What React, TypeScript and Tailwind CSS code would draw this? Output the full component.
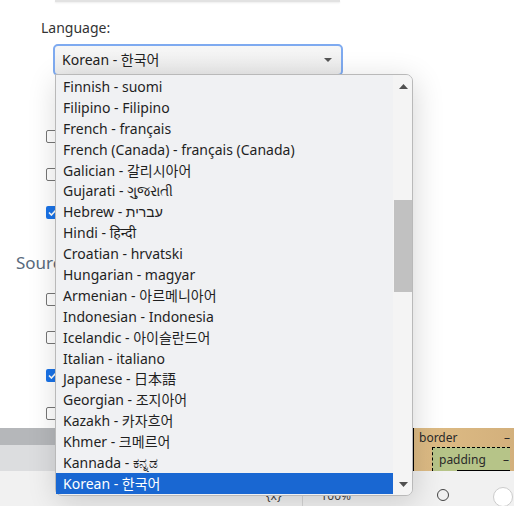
import React from 'react';

const languages = [
  'Finnish - suomi',
  'Filipino - Filipino',
  'French - français',
  'French (Canada) - français (Canada)',
  'Galician - 갈리시아어',
  'Gujarati - ગુજરાતી',
  'Hebrew - עברית',
  'Hindi - हिन्दी',
  'Croatian - hrvatski',
  'Hungarian - magyar',
  'Armenian - 아르메니아어',
  'Indonesian - Indonesia',
  'Icelandic - 아이슬란드어',
  'Italian - italiano',
  'Japanese - 日本語',
  'Georgian - 조지아어',
  'Kazakh - 카자흐어',
  'Khmer - 크메르어',
  'Kannada - ಕನ್ನಡ',
  'Korean - 한국어',
];

const selected = 'Korean - 한국어';

// labels sit under the open popup, so only the boxes are drawn
function Checkbox({ checked = false }: { checked?: boolean }) {
  return (
    <div className="flex h-[13px] items-center pl-[46px]">
      {checked ? (
        <span className="flex h-[13px] w-[13px] items-center justify-center rounded-[2px] bg-[#1a73e8]">
          <svg width="9" height="7" viewBox="0 0 9 7">
            <path d="M1 3.5 3.4 6 8 1" fill="none" stroke="#fff" strokeWidth="1.6" />
          </svg>
        </span>
      ) : (
        <span className="h-[13px] w-[13px] rounded-[2px] border border-[#767676] bg-white" />
      )}
    </div>
  );
}

function Arrow({ up = false }: { up?: boolean }) {
  return (
    <svg width="9" height="5" viewBox="0 0 9 5">
      <path d={up ? 'M0 5 4.5 0 9 5Z' : 'M0 0 4.5 5 9 0Z'} fill="#505050" />
    </svg>
  );
}

export default function App() {
  return (
    <div className="relative flex h-[506px] w-[514px] flex-col overflow-hidden bg-white font-['Noto_Sans','Noto_Sans_CJK_KR',sans-serif] text-[#222]">
      {/* page content */}
      <div className="flex h-[428px] flex-col">
        <div className="ml-[55px] h-[2px] w-[285px] bg-[#e2e2e2] shadow-[0_1px_2px_rgba(0,0,0,0.08)]" />
        <div className="pl-[41px] pt-[16px] text-[14px] leading-[20px] text-[#333]">Language:</div>

        <div className="ml-[53px] mt-[6px] flex h-[32px] w-[290px] items-center justify-between rounded-[5px] border-2 border-[#7eaaf0] bg-gradient-to-b from-[#f7f7f7] to-[#ebebeb] pl-[7px] pr-[9px]">
          <span className="text-[14px] leading-[20px] text-[#222]">{selected}</span>
          <svg width="8" height="4" viewBox="0 0 8 4">
            <path d="M0 0 4 4 8 0Z" fill="#555" />
          </svg>
        </div>

        <div className="mt-[54px] flex flex-col gap-[25px]">
          <Checkbox />
          <Checkbox />
          <Checkbox checked />
        </div>

        <div className="mt-[32px] pl-[16px] text-[17px] leading-[24px] text-[#586a7c]">Source language</div>

        <div className="mt-[18px] flex flex-col gap-[25px]">
          <Checkbox />
          <Checkbox />
          <Checkbox checked />
          <Checkbox />
        </div>
      </div>

      {/* devtools panel */}
      <div className="flex h-[78px] flex-col">
        <div className="flex h-[47px]">
          <div className="flex flex-1 flex-col">
            <div className="h-[17px] bg-[#b5b7ba]" />
            <div className="flex-1 bg-[#dcdddf]" />
          </div>
          <div className="flex w-[101px] flex-col border-l border-black bg-gradient-to-r from-[#dfbd86] to-[#d3b07c] pl-[5px] pr-[4px] text-[12px] leading-[16px] text-[#2a2a2a]">
            <div className="flex justify-between pt-[2px]">
              <span>border</span>
              <span>–</span>
            </div>
            <div className="ml-[13px] mt-[1px] flex flex-1 flex-col border-l border-t border-dashed border-black bg-[#b6c488] pl-[6px]">
              <div className="flex justify-between pt-[4px] pr-[1px]">
                <span>padding</span>
                <span>–</span>
              </div>
              <div className="ml-[18px] mt-[2px] flex-1 border-t border-black" />
            </div>
          </div>
        </div>
        <div className="h-[9px] bg-gradient-to-b from-[#868889] to-[#76787a]" />
        <div className="flex flex-1 items-start bg-[#f1f1f1] pt-[18px] text-[12px] leading-[14px] text-[#444]">
          <span className="ml-[266px]">{'{x}'}</span>
          <span className="ml-[21px] h-[22px] w-px bg-[#d6d6d6]" />
          <span className="ml-[17px]">100%</span>
          <span className="ml-[86px] h-[12px] w-[12px] rounded-full border-[1.5px] border-[#444]" />
          <span className="ml-[44px] mt-[-2px] h-[20px] w-[20px] rounded-full border border-[#ccc] bg-white" />
        </div>
      </div>

      {/* dropdown popup */}
      <div className="absolute left-[55px] top-[74px] flex h-[422px] w-[358px] rounded-[7px] rounded-tl-none border border-[#b9b9b9] bg-[#f0f1f3] shadow-[2px_6px_30px_rgba(0,0,0,0.16)]">
        <div className="flex flex-1 flex-col pt-[1px]">
          {languages.map((lang) => (
            <div
              key={lang}
              className={`flex h-[20.9px] items-center whitespace-nowrap pl-[7px] text-[14px] ${
                lang === selected ? 'bg-[#1967d2] text-white' : 'text-[#1f1f1f]'
              }`}
            >
              {lang}
            </div>
          ))}
        </div>
        <div className="flex w-[19px] flex-col overflow-hidden rounded-r-[6px] bg-[#f4f4f4]">
          <div className="flex h-[22px] items-center justify-center pl-[1px]">
            <Arrow up />
          </div>
          <div className="ml-[1px] mt-[103px] h-[92px] bg-[#c1c1c1]" />
          <div className="flex-1" />
          <div className="flex h-[22px] items-center justify-center pl-[1px]">
            <Arrow />
          </div>
        </div>
      </div>
    </div>
  );
}
